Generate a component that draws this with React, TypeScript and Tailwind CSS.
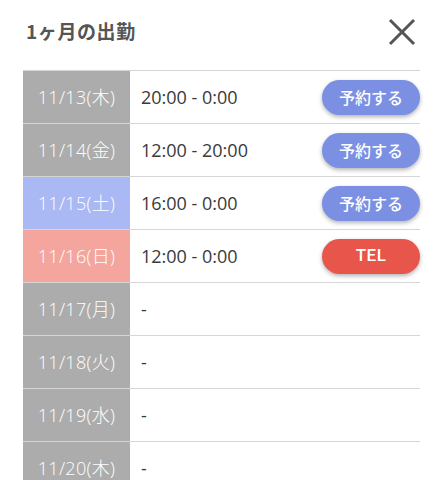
import React from "react";

type Row = { date: string; time: string; kind: "gray" | "blue" | "red"; btn?: "reserve" | "tel" };

const rows: Row[] = [
  { date: "11/13(木)", time: "20:00 - 0:00", kind: "gray", btn: "reserve" },
  { date: "11/14(金)", time: "12:00 - 20:00", kind: "gray", btn: "reserve" },
  { date: "11/15(土)", time: "16:00 - 0:00", kind: "blue", btn: "reserve" },
  { date: "11/16(日)", time: "12:00 - 0:00", kind: "red", btn: "tel" },
  { date: "11/17(月)", time: "-", kind: "gray" },
  { date: "11/18(火)", time: "-", kind: "gray" },
  { date: "11/19(水)", time: "-", kind: "gray" },
  { date: "11/20(木)", time: "-", kind: "gray" },
];

const font = { fontFamily: '"Open Sans", "Noto Sans CJK JP", sans-serif' };
const jp = { fontFamily: '"Noto Sans CJK JP", sans-serif' };

export default function App() {
  return (
    <div className="w-[442px] h-[480px] overflow-hidden bg-white" style={font}>
      <div className="flex items-center justify-between pl-[26px] pr-[26px] h-[63px]">
        <h1 className="text-[19px] font-bold text-[#555] tracking-[0.6px]" style={jp}>
          1ヶ月の出勤
        </h1>
        <svg width="28" height="28" viewBox="0 0 28 28" className="mt-[1px]">
          <path d="M2 2 L26 26 M26 2 L2 26" stroke="#555" strokeWidth="3" strokeLinecap="butt" />
        </svg>
      </div>
      <div className="mt-[7px] ml-[23px] w-[397px] border-t border-[#d6d6d6]">
        {rows.map((r) => (
          <div key={r.date} className="flex h-[53px] border-b border-[#d6d6d6]">
            <div
              className={
                "w-[107px] flex items-center justify-center text-white text-[18px] font-light tracking-[0.3px] " +
                (r.kind === "gray" ? "bg-[#acacac]" : r.kind === "blue" ? "bg-[#aab8f3]" : "bg-[#f3a59e]")
              }
            >
              {r.date}
            </div>
            <div className="flex-1 flex items-center justify-between pl-[11px]">
              <span className="text-[18px] text-[#3a3a3a] font-normal">{r.time}</span>
              {r.btn === "reserve" && (
                <button className="w-[98px] h-[35px] rounded-full bg-[#7b8fe3] text-white text-[16px] font-medium shadow-[0_2px_4px_rgba(0,0,0,0.3)]" style={jp}>
                  予約する
                </button>
              )}
              {r.btn === "tel" && (
                <button className="w-[98px] h-[35px] rounded-full bg-[#e8554a] text-white text-[17px] font-medium tracking-[0.5px] shadow-[0_2px_4px_rgba(0,0,0,0.3)]" style={{ fontFamily: '"Roboto", sans-serif' }}>
                  TEL
                </button>
              )}
            </div>
          </div>
        ))}
      </div>
    </div>
  );
}
